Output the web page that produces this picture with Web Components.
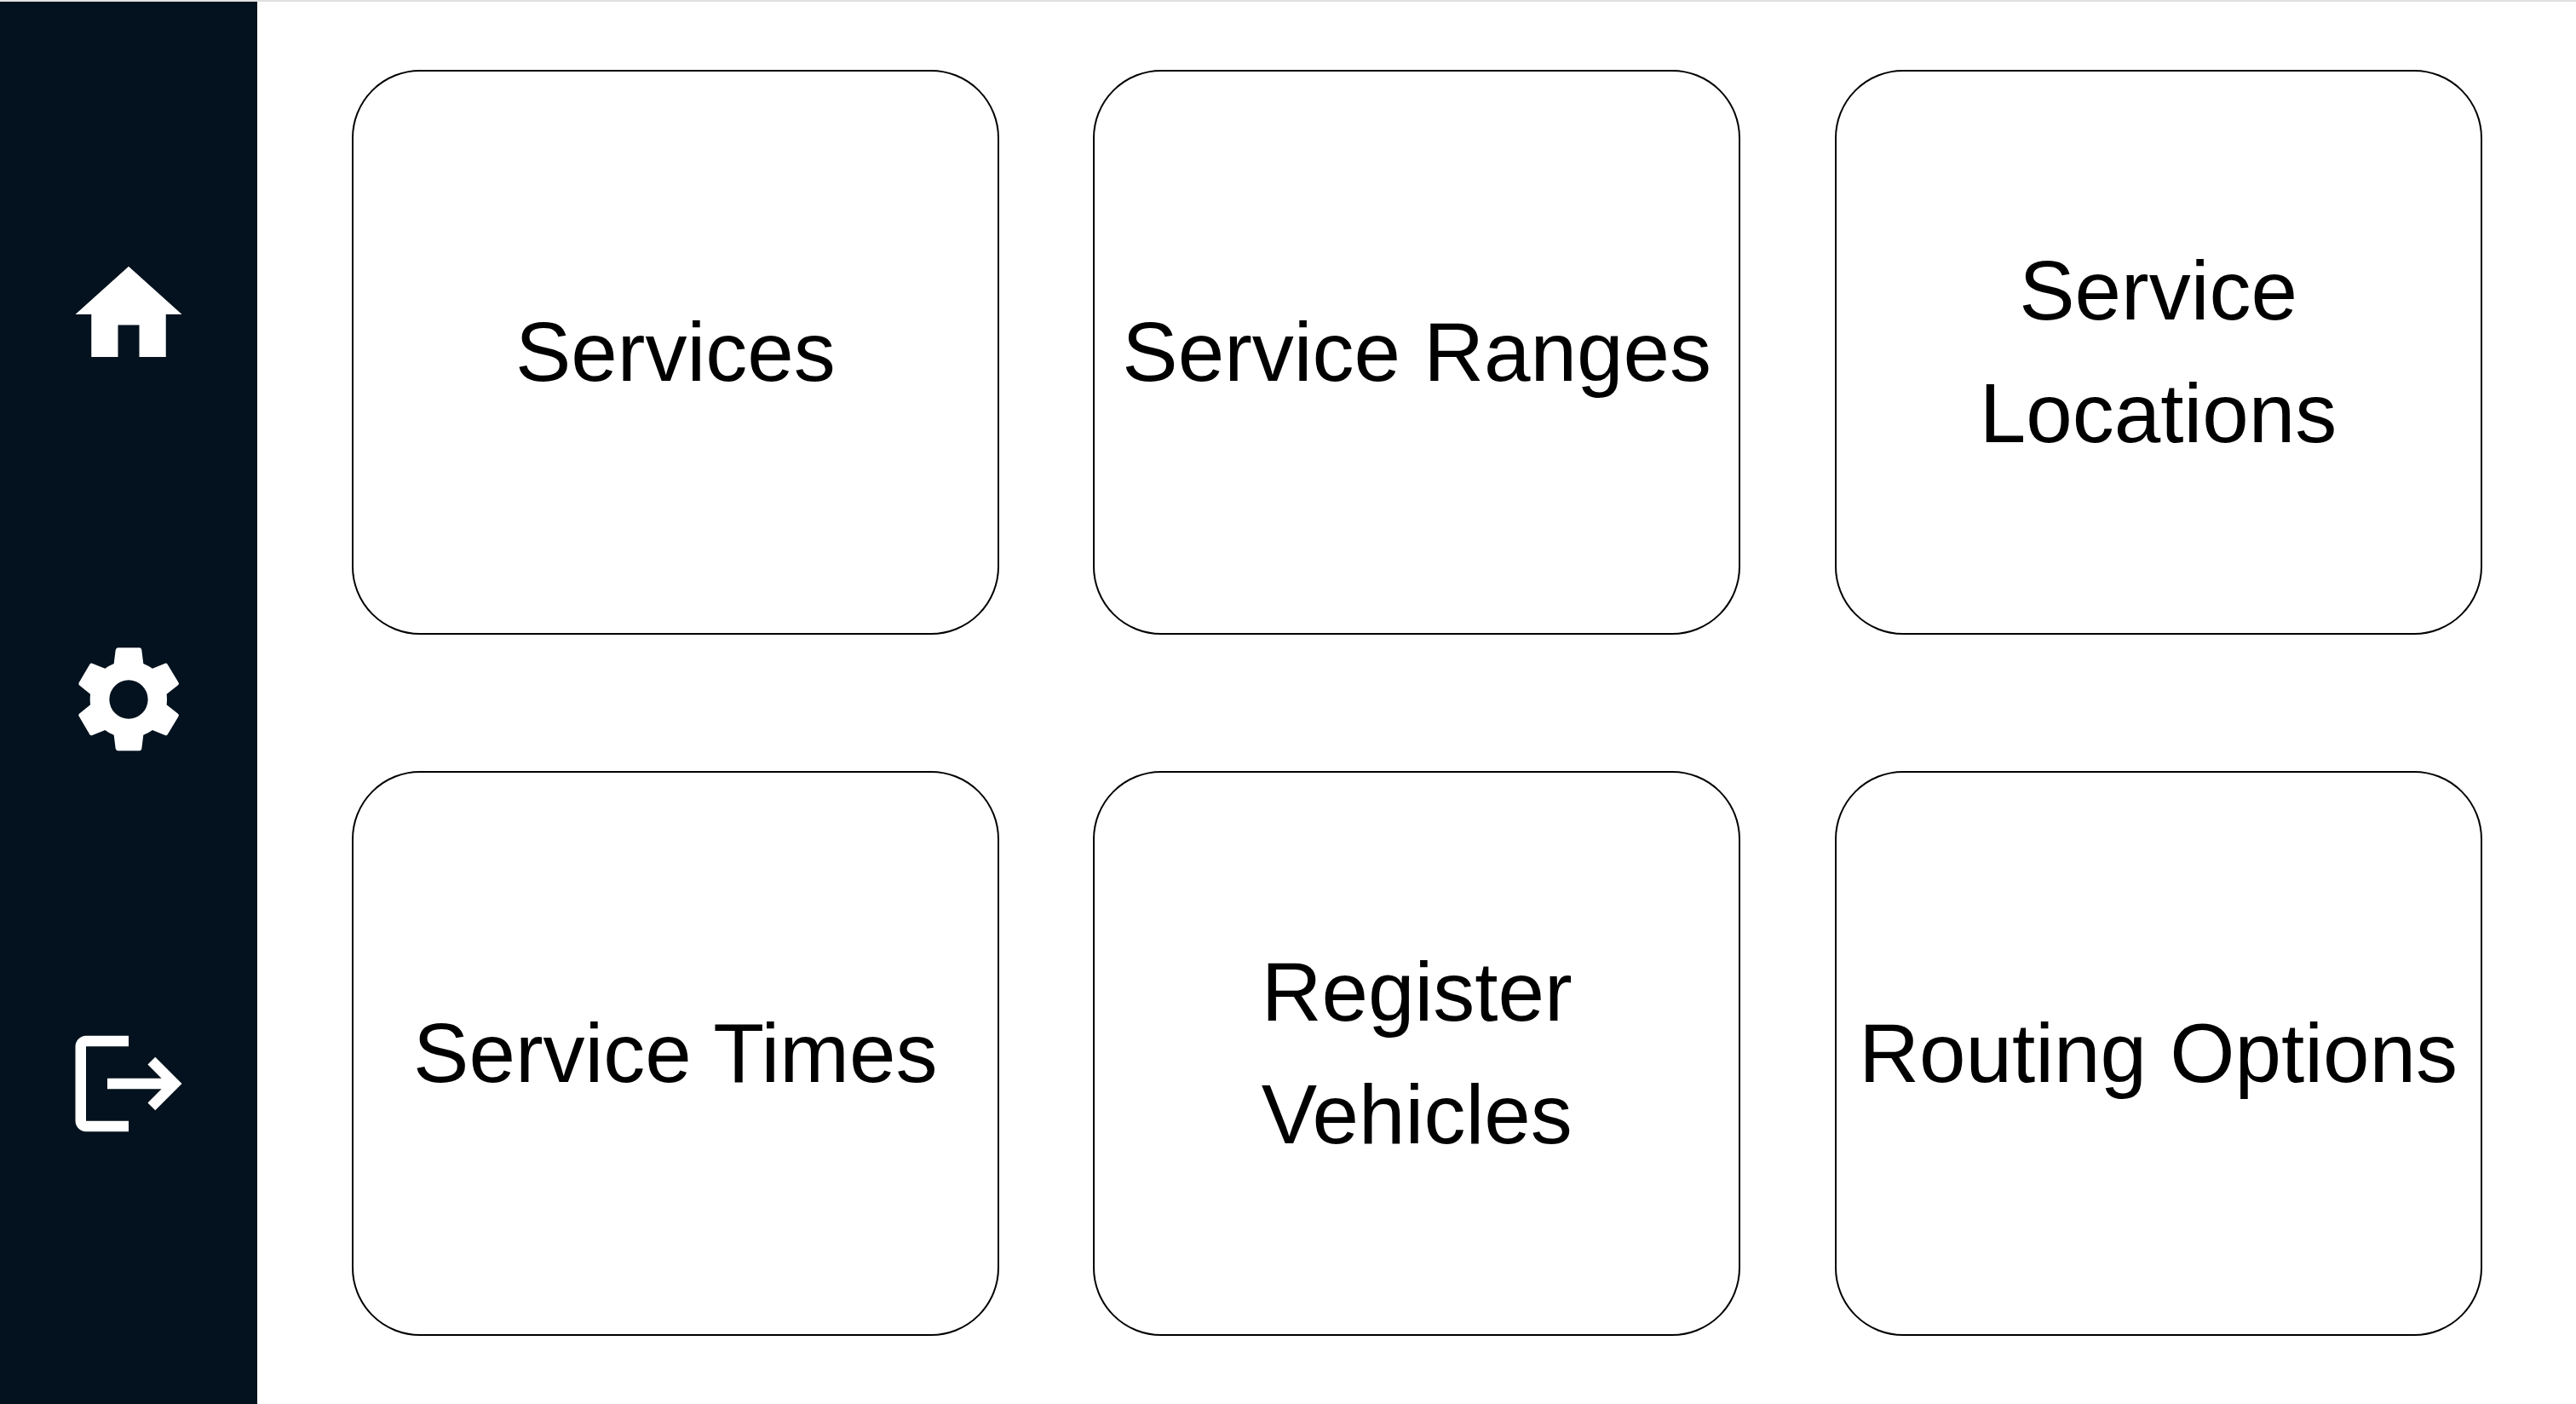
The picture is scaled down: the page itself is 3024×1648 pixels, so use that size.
<!DOCTYPE html>
<html lang="en">
<head>
<meta charset="utf-8">
<title>Services</title>
<style>
  html, body { height: 100%; }
  body { margin: 0; background: #fff; color: #000; font-family: "Liberation Sans", Arial, sans-serif; }
</style>
</head>
<body>
<app-shell>
  <side-nav slot="nav">
    <nav-link label="Home" icon="home"></nav-link>
    <nav-link label="Settings" icon="settings"></nav-link>
    <nav-link label="Log out" icon="logout"></nav-link>
  </side-nav>
  <card-grid>
    <option-card>Services</option-card>
    <option-card>Service Ranges</option-card>
    <option-card>Service Locations</option-card>
    <option-card>Service Times</option-card>
    <option-card>Register Vehicles</option-card>
    <option-card>Routing Options</option-card>
  </card-grid>
</app-shell>
<script>
  const render = (el, html) => { el.attachShadow({ mode: "open" }).innerHTML = html; };

  customElements.define("app-shell", class extends HTMLElement {
    constructor() {
      super();
      render(this, `
        <style>
          :host { display: flex; box-sizing: border-box; min-height: 100vh; border-top: 2px solid #e0e0e0; }
          main { flex: 1; display: flex; min-width: 0; }
          ::slotted(card-grid) { flex: 1; }
        </style>
        <slot name="nav"></slot>
        <main><slot></slot></main>`);
    }
  });

  customElements.define("side-nav", class extends HTMLElement {
    constructor() {
      super();
      render(this, `
        <style>
          :host { display: flex; flex: 0 0 10%; background: #03121e; color: #fff; }
          nav { flex: 1; display: flex; flex-direction: column; align-items: center; justify-content: space-evenly; }
        </style>
        <nav aria-label="Main"><slot></slot></nav>`);
    }
  });

  // The gear is drawn on a finer grid and scaled about its hub.
  const icons = {
    home: `<path d="M10 20v-6h4v6h5v-8h3L12 3 2 12h3v8z"/>`,
    settings: `<path transform="translate(12 12) scale(.0533) translate(-275 -242)" fill-rule="evenodd" d="M237 60H314Q320 61 321 68L327 116Q344 123 359 133L403 115Q409 113 412 118L451 183Q453 188 449 192L409 223Q411 242 409 261L449 292Q453 296 451 301L412 366Q409 370 403 368L359 350Q344 361 327 367L321 415Q320 422 314 423H237Q231 422 229 415L223 367Q206 361 192 350L147 368Q141 370 138 366L100 301Q97 296 101 292L140 261Q138 242 140 223L101 192Q98 188 100 183L138 118Q141 113 147 115L192 133Q206 123 223 116L229 68Q231 61 237 60ZM275 174A68 68 0 1 0 275 310A68 68 0 1 0 275 174Z"/>`,
    logout: `<path d="M17 7l-1.41 1.41L18.17 11H8v2h10.17l-2.58 2.58L17 17l5-5zM4 5h8V3H4c-1.1 0-2 .9-2 2v14c0 1.1.9 2 2 2h8v-2H4z"/>`
  };

  customElements.define("nav-link", class extends HTMLElement {
    connectedCallback() {
      if (this.shadowRoot) return;
      const name = this.getAttribute("icon");
      render(this, `
        <style>
          :host { display: block; }
          a { display: block; color: inherit; padding-bottom: 9px; }
          svg { display: block; width: 150px; height: 150px; fill: currentColor; }
        </style>
        <a href="#${name}" aria-label="${this.getAttribute("label")}">
          <svg viewBox="0 0 24 24" aria-hidden="true">${icons[name]}</svg>
        </a>`);
    }
  });

  customElements.define("card-grid", class extends HTMLElement {
    constructor() {
      super();
      render(this, `
        <style>
          :host {
            display: grid;
            grid-template-columns: repeat(3, minmax(0, 760px));
            grid-auto-rows: 663px;
            justify-content: space-evenly;
            align-content: space-around;
          }
        </style>
        <slot></slot>`);
    }
  });

  customElements.define("option-card", class extends HTMLElement {
    constructor() {
      super();
      render(this, `
        <style>
          :host { display: flex; }
          button {
            flex: 1; box-sizing: border-box; margin: 0; padding: 0 16px 2px;
            border: 2px solid #000; border-radius: 80px; background: #fff; color: inherit;
            font: 98px/144px "Liberation Sans", Arial, sans-serif; text-align: center; cursor: pointer;
          }
        </style>
        <button type="button"><slot></slot></button>`);
    }
  });
</script>
</body>
</html>
